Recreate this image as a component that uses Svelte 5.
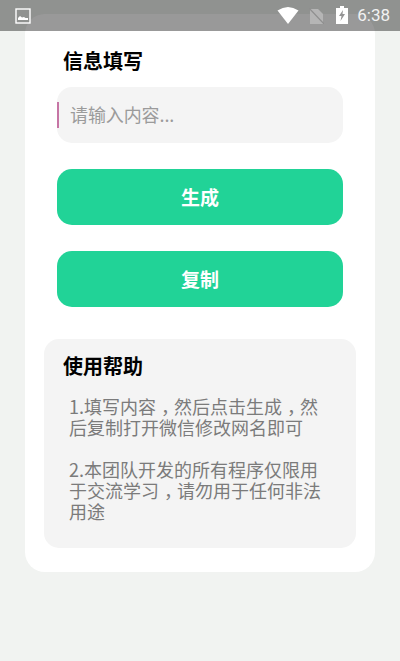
<script lang="ts">
  const help = [
    ['1.填写内容，然后点击生成，然', '后复制打开微信修改网名即可'],
    ['2.本团队开发的所有程序仅限用', '于交流学习，请勿用于任何非法', '用途']
  ];
</script>

<div class="page">
  <div class="status">
    <svg class="pic" width="16" height="16" viewBox="0 0 16 16">
      <rect x="1" y="1" width="14" height="14" fill="none" stroke="#fff" stroke-width="1.4" />
      <path d="M3 12V10L5 8L7 9.5L9 9L10.500 10L13 10V12Z" fill="#fff" />
    </svg>
    <div class="right">
      <svg width="22" height="17" viewBox="0 0 22 17"><path d="M0.500 3.500Q11-3.500 21.500 3.500L11 17Z" fill="#fff" /></svg>
      <svg class="sim" width="15" height="16" viewBox="0 0 15 16"><path d="M1 1H9L14 6V16H1Z" fill="#b5b5b5" /><path d="M0 0L15 16" stroke="#8f8f8f" stroke-width="1.200" /></svg>
      <svg class="batt" width="12" height="18" viewBox="0 0 12 18"><path d="M4 0H8V2H12V18H0V2H4Z" fill="#fff" /><path d="M7 4L3 10H5.500L4.500 15L9 8H6.500Z" fill="#949494" /></svg>
      <span class="time">6:38</span>
    </div>
  </div>

  <div class="card">
    <h2 class="title">信息填写</h2>
    <div class="field">
      <span class="caret"></span>
      <span class="placeholder">请输入内容...</span>
    </div>
    <button type="button" class="action">生成</button>
    <button type="button" class="action">复制</button>

    <section class="help">
      <h2>使用帮助</h2>
      {#each help as para}
        <p>
          {#each para as line}
            <span class="line">
              {#each line.split('，') as part, i}{#if i > 0}<span class="comma">，</span>{/if}{part}{/each}
            </span>
          {/each}
        </p>
      {/each}
    </section>
  </div>
</div>

<style>
  :global(body) { margin:0; background:#f1f3f1; font-family:"Noto Sans CJK SC","Roboto",sans-serif; }
  .page { position:relative; height:661px; overflow:hidden; padding-top:14px; box-sizing:border-box; }
  .status { position:absolute; top:0; left:0; right:0; height:31px; z-index:2; background:rgba(0,0,0,.4); display:flex; align-items:center; justify-content:space-between; padding:0 10px 0 15px; box-sizing:border-box; }
  .pic { display:block; }
  .right { display:flex; align-items:center; }
  .right svg { display:block; }
  .right .sim { margin:0 12px 0 10px; }
  .right .batt { margin:-2px 9px 0 0; }
  .time { color:#f2f2f2; font:17px/31px Roboto,sans-serif; }

  .card { width:350px; height:558px; margin:0 auto; background:#fff; border-radius:20px; padding:31px 19px 0 19px; box-sizing:border-box; }
  .title { margin:0 0 10px 19px; font-size:20px; line-height:32px; font-weight:700; color:#000; }
  .field { margin:0 13px; height:56px; border-radius:15px; background:#f4f4f4; display:flex; align-items:center; }
  .caret { width:2px; height:26px; background:#c675a5; margin-right:11px; }
  .placeholder { font-size:18px; line-height:22px; color:#9b9b9b; padding-bottom:3px; letter-spacing:-.1px; }
  .action { display:block; width:286px; height:56px; margin:26px 13px 0; padding:0 0 2px; border:0; border-radius:15px; background:#21d397; color:#fff; font:700 19px "Noto Sans CJK SC",sans-serif; }
  .help { margin-top:32px; height:209px; border-radius:15px; background:#f4f4f4; padding:11px 19px 0; box-sizing:border-box; }
  .help h2 { margin:0 0 14px; font-size:20px; line-height:32px; font-weight:700; color:#000; }
  .help p { margin:0 0 21px 6px; font-size:18px; line-height:21px; color:#7b7b7b; white-space:nowrap; }
  .line { display:block; }
  .comma { display:inline-block; width:18px; padding-left:5px; box-sizing:border-box; }
</style>
